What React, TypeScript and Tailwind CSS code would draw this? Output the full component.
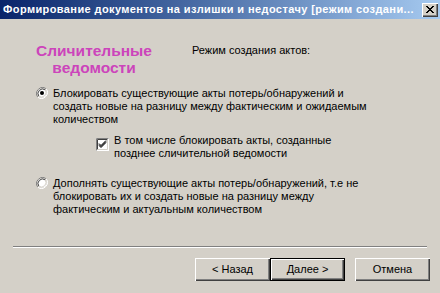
import React from "react";

function Radio({ checked }: { checked?: boolean }) {
  return (
    <svg width="12" height="12" viewBox="0 0 12 12" className="shrink-0">
      <path d="M10.2 1.8A6 6 0 0 0 1.8 10.2" stroke="#808080" strokeWidth="1" fill="none" />
      <path d="M1.8 10.2A6 6 0 0 0 10.2 1.8" stroke="#ffffff" strokeWidth="1" fill="none" />
      <circle cx="6" cy="6" r="4.6" fill="#ffffff" />
      <path d="M9.2 2.8A4.6 4.6 0 0 0 2.8 9.2" stroke="#404040" strokeWidth="1" fill="none" />
      <path d="M2.8 9.2A4.6 4.6 0 0 0 9.2 2.8" stroke="#d4d0c8" strokeWidth="1" fill="none" />
      {checked && <circle cx="6" cy="6" r="2" fill="#000000" />}
    </svg>
  );
}

function Checkbox() {
  return (
    <svg width="13" height="13" viewBox="0 0 13 13" className="shrink-0">
      <rect x="0" y="0" width="13" height="13" fill="#ffffff" />
      <path d="M0.5 12.5V0.5H12.5" stroke="#808080" fill="none" />
      <path d="M1.5 11.5V1.5H11.5" stroke="#404040" fill="none" />
      <path d="M1.5 11.5H11.5V1.5" stroke="#d4d0c8" fill="none" />
      <path d="M3 5.5L5 7.5L10 2.5M3 6.5L5 8.5L10 3.5M3 7.5L5 9.5L10 4.5" stroke="#000000" fill="none" />
    </svg>
  );
}

function Button({ label, primary }: { label: string; primary?: boolean }) {
  return (
    <button
      className={
        "w-[75px] h-[23px] bg-[#d4d0c8] text-[11px] text-black " +
        (primary
          ? "border border-black shadow-[inset_1px_1px_#ffffff,inset_-1px_-1px_#404040,inset_-2px_-2px_#808080]"
          : "shadow-[inset_1px_1px_#ffffff,inset_-1px_-1px_#404040,inset_-2px_-2px_#808080]")
      }
    >
      {label}
    </button>
  );
}

export default function App() {
  return (
    <div className="w-[440px] h-[293px] bg-[#d4d0c8] flex flex-col font-['Liberation_Sans',Arial,sans-serif] text-[11px] text-black overflow-hidden">
      <div className="h-[19px] flex items-center pl-[3px] pr-[2px] bg-gradient-to-r from-[#0a246a] to-[#a6caf0]">
        <span className="flex-1 text-white font-bold tracking-[0.4px] whitespace-nowrap overflow-hidden">
          Формирование документов на излишки и недостачу [режим создани...
        </span>
        <div className="w-[16px] h-[14px] ml-[4px] flex items-center justify-center bg-[#d4d0c8] shadow-[inset_1px_1px_#ffffff,inset_-1px_-1px_#404040,inset_-2px_-2px_#808080]">
          <svg width="8" height="7" viewBox="0 0 8 7">
            <path d="M0 0L7 7M1 0L8 7M7 0L0 7M8 0L1 7" stroke="#000" strokeWidth="1" />
          </svg>
        </div>
      </div>

      <div className="flex items-start pl-[33px] pt-[23px]">
        <div className="w-[122px] text-center text-[15.5px] leading-[17px] font-bold text-[#cc44bb]">
          Сличительные
          <br />
          ведомости
        </div>
        <div className="ml-[37px] pt-[2px] leading-[13px]">Режим создания актов:</div>
      </div>

      <div className="flex items-start pl-[36px] mt-[11px]">
        <Radio checked />
        <div className="ml-[5px] leading-[13px]">
          Блокировать существующие акты потерь/обнаружений и
          <br />
          создать новые на разницу между фактическим и ожидаемым
          <br />
          количеством
        </div>
      </div>

      <div className="flex items-start pl-[96px] mt-[8px]">
        <div className="pt-[4px]">
          <Checkbox />
        </div>
        <div className="ml-[5px] leading-[13px]">
          В том числе блокировать акты, созданные
          <br />
          позднее сличительной ведомости
        </div>
      </div>

      <div className="flex items-start pl-[36px] mt-[17px]">
        <Radio />
        <div className="ml-[5px] leading-[13px]">
          Дополнять существующие акты потерь/обнаружений, т.е не
          <br />
          блокировать их и создать новые на разницу между
          <br />
          фактическим и актуальным количеством
        </div>
      </div>

      <div className="mx-[13px] mt-[30px] h-[2px] border-t border-t-[#808080] border-b border-b-white" />

      <div className="flex justify-end pr-[10px] mt-[10px]">
        <Button label="< Назад" />
        <Button label="Далее >" primary />
        <div className="ml-[10px]">
          <Button label="Отмена" />
        </div>
      </div>
    </div>
  );
}
